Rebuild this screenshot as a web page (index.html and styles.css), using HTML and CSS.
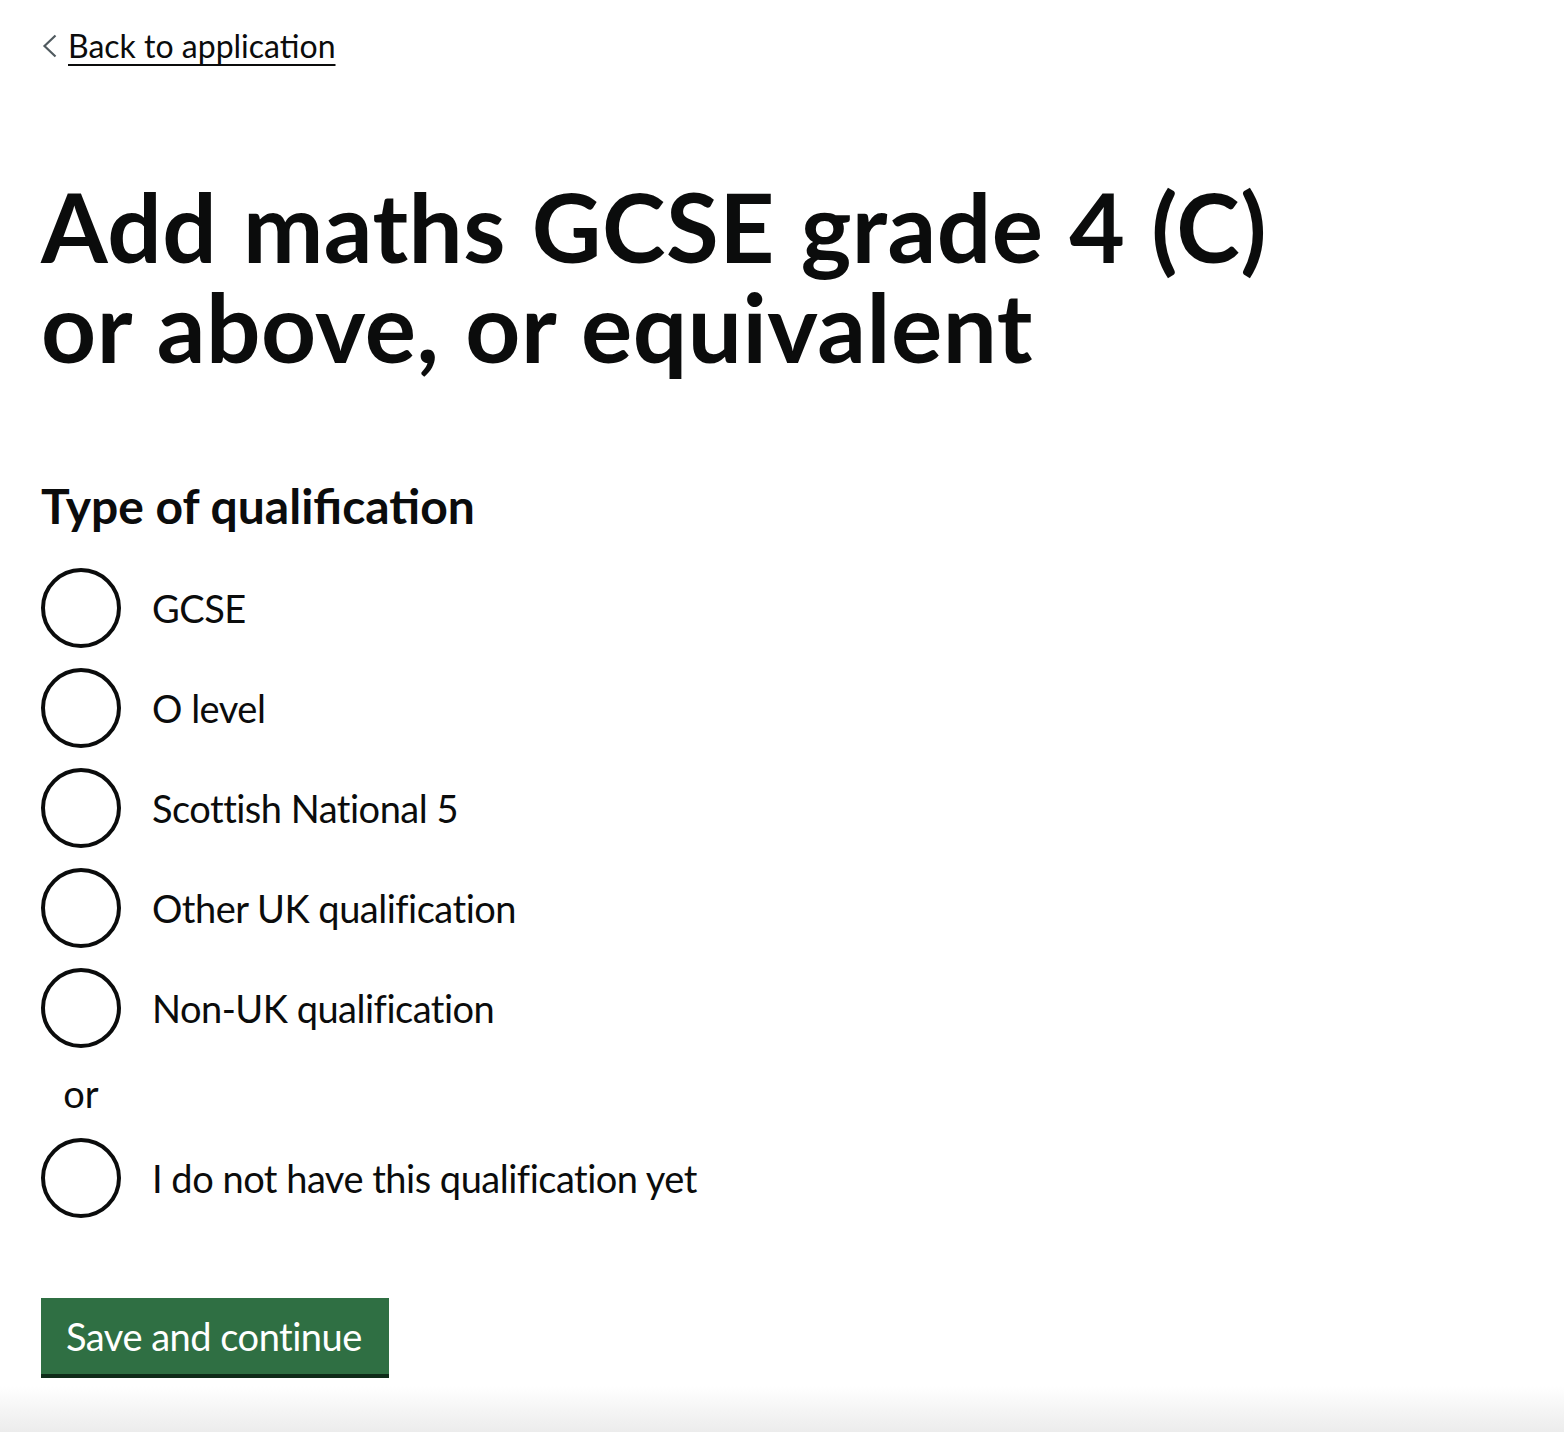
FILE: index.html
```html
<!DOCTYPE html>
<html lang="en">
<head>
<meta charset="utf-8">
<title>Add maths GCSE grade 4 (C) or above, or equivalent</title>
<link rel="stylesheet" href="styles.css">
</head>
<body>
<div class="page">
  <a class="back-link" href="#">
    <svg class="back-chevron" width="16" height="24" viewBox="0 0 16 24" aria-hidden="true"><path d="M14.5 1.5 L3.5 12 L14.5 22.5" fill="none" stroke="#505a5f" stroke-width="2.2"/></svg>
    <span class="back-text">Back to application</span>
  </a>
  <main class="main">
    <h1 class="heading-xl">Add maths GCSE grade 4 (C) or above, or equivalent</h1>
    <form class="form">
      <fieldset class="fieldset">
        <legend class="legend">Type of qualification</legend>
        <div class="radios">
          <label class="radio"><span class="radio-circle"></span><span class="radio-label">GCSE</span></label>
          <label class="radio"><span class="radio-circle"></span><span class="radio-label">O level</span></label>
          <label class="radio"><span class="radio-circle"></span><span class="radio-label">Scottish National 5</span></label>
          <label class="radio"><span class="radio-circle"></span><span class="radio-label">Other UK qualification</span></label>
          <label class="radio"><span class="radio-circle"></span><span class="radio-label">Non-UK qualification</span></label>
          <div class="divider">or</div>
          <label class="radio"><span class="radio-circle"></span><span class="radio-label">I do not have this qualification yet</span></label>
        </div>
      </fieldset>
      <button class="button" type="button">Save and continue</button>
    </form>
  </main>
</div>
<div class="bottom-fade"></div>
</body>
</html>
```
FILE: styles.css
```css
html, body {
  margin: 0;
  padding: 0;
  background: #ffffff;
}
body {
  font-family: Lato, "Noto Sans", Arial, sans-serif;
  color: #0b0c0c;
  min-height: 1432px;
  position: relative;
  overflow: hidden;
}
.page {
  padding: 26px 41px 0 41px;
}
.back-link {
  display: inline-flex;
  align-items: center;
  gap: 11px;
  color: #0b0c0c;
  text-decoration: none;
  font-size: 32px;
  line-height: 40px;
}
.back-chevron {
  display: block;
  margin-top: 0;
}
.back-text {
  text-decoration: underline;
  text-decoration-thickness: 2px;
  text-underline-offset: 6px;
}
.main {
  padding-top: 110px;
}
.heading-xl {
  margin: 0 0 100px 0;
  font-size: 96px;
  line-height: 100px;
  font-weight: 700;
  max-width: 1300px;
  letter-spacing: 0.5px;
  word-spacing: 2px;
}
.form {
  margin: 0;
}
.fieldset {
  margin: 0;
  padding: 0;
  border: 0;
  min-width: 0;
}
.legend {
  padding: 0;
  margin: 0 0 32px 0;
  font-size: 48px;
  line-height: 60px;
  font-weight: 700;
}
.radios {
  display: flex;
  flex-direction: column;
}
.radio {
  display: flex;
  align-items: center;
  margin-bottom: 20px;
  min-height: 80px;
}
.radio-circle {
  box-sizing: border-box;
  width: 80px;
  height: 80px;
  border: 4px solid #0b0c0c;
  border-radius: 50%;
  flex: 0 0 auto;
}
.radio-label {
  padding-left: 31px;
  font-size: 38px;
  line-height: 50px;
  letter-spacing: -0.5px;
}
.divider {
  width: 80px;
  text-align: center;
  font-size: 38px;
  line-height: 50px;
  margin-bottom: 20px;
}
.button {
  margin-top: 60px;
  display: block;
  box-sizing: border-box;
  width: 348px;
  height: 76px;
  padding: 0 0 0 25px;
  border: 0;
  background: #2f6f43;
  box-shadow: 0 4px 0 #0f2b19;
  color: #ffffff;
  font-family: Lato, "Noto Sans", Arial, sans-serif;
  font-size: 38px;
  line-height: 76px;
  letter-spacing: -0.5px;
  text-align: left;
}
.bottom-fade {
  position: absolute;
  left: 0;
  right: 0;
  bottom: 0;
  height: 46px;
  background: linear-gradient(to bottom, rgba(236,236,236,0) 0%, #ececec 100%);
}
```
